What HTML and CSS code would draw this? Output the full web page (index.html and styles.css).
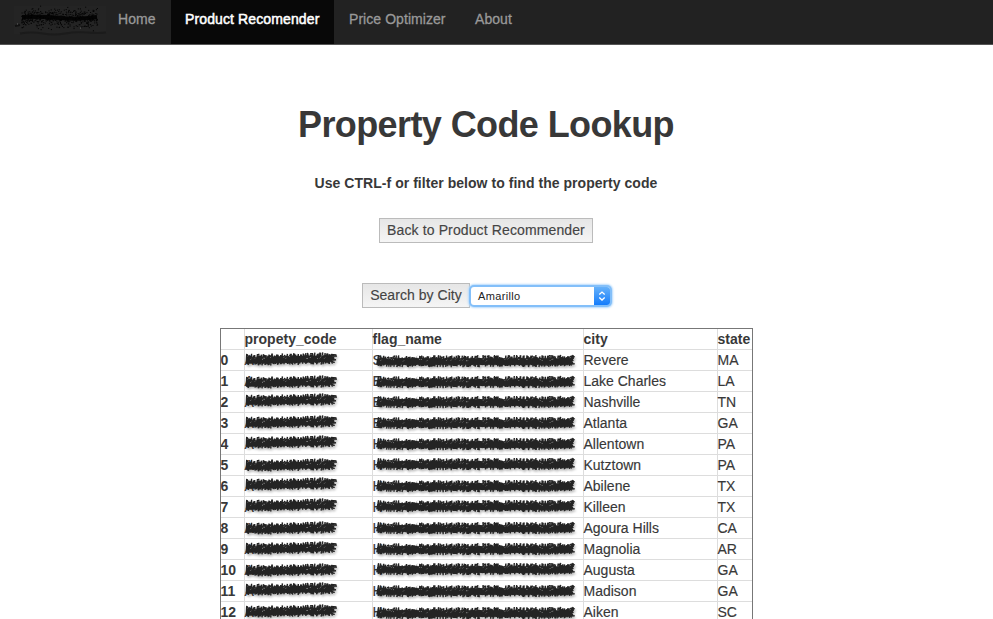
FILE: index.html
```html
<!DOCTYPE html>
<html lang="en">
<head>
<meta charset="utf-8">
<title>Property Code Lookup</title>
<link rel="stylesheet" href="styles.css">
</head>
<body>
<nav class="navbar">
  <span class="brand"><svg class="brand-mark" width="108" height="40" aria-hidden="true"></svg></span>
  <a class="nav-home">Home</a>
  <a class="active">Product Recomender</a>
  <a class="nav-price">Price Optimizer</a>
  <a class="nav-about">About</a>
</nav>
<main>
  <h1>Property Code Lookup</h1>
  <p class="hint">Use CTRL-f or filter below to find the property code</p>
  <button class="btn back">Back to Product Recommender</button>
  <div class="search">
    <button class="btn find">Search by City</button>
    <div class="select"><span>Amarillo</span>
      <i><svg width="16" height="18" viewBox="0 0 16 18"><path d="M5.3 7.6 8 5.1l2.7 2.5M5.3 10.6 8 13.1l2.7-2.5" fill="none" stroke="#fff" stroke-width="1.3"/></svg></i>
    </div>
  </div>
  <table>
    <colgroup><col class="c0"><col class="c1"><col class="c2"><col class="c3"><col class="c4"></colgroup>
    <thead><tr><th></th><th>propety_code</th><th>flag_name</th><th>city</th><th>state</th></tr></thead>
    <tbody></tbody>
  </table>
</main>
<script src="app.js"></script>
</body>
</html>
```
FILE: styles.css
```css
* { box-sizing: border-box; }
body {
  margin: 0;
  height: 619px;
  overflow: hidden;
  background: #fff;
  color: #383838;
  font: 14px/20px "Liberation Sans", Arial, sans-serif;
}
.navbar {
  display: flex;
  height: 45px;
  background: #222;
  border-bottom: 1px solid #555;
  color: #999;
}
.navbar a { padding: 9px 0 0 15px; letter-spacing: .06px; -webkit-text-stroke: .3px; white-space: nowrap; }
.brand { width: 103px; }
.brand-mark { display: block; }
.nav-home { width: 68px; }
.navbar .active { width: 163px; background: #080808; color: #fff; padding-left: 14px; letter-spacing: .12px; -webkit-text-stroke: .5px; }
.nav-price { width: 126px; }
main { display: flex; flex-direction: column; align-items: center; width: 972px; }
h1 { margin: 60px 0 0; font-size: 36px; line-height: 40px; font-weight: 700; letter-spacing: -.6px; white-space: nowrap; }
.hint { margin: 28px 0 0; font-weight: 700; letter-spacing: .04px; white-space: nowrap; }
.btn {
  height: 25px;
  padding: 0 0 2px;
  border: 1px solid #bbb;
  background: linear-gradient(#e6e6e6, #f5f5f5);
  color: #444;
  font: 14px/20px "Liberation Sans", Arial, sans-serif;
  -webkit-text-stroke: .15px;
  white-space: nowrap;
}
.back { width: 214px; margin-top: 25px; letter-spacing: .12px; }
.search { display: flex; align-items: center; margin: 40px 0 0 4px; width: 252px; height: 25px; }
.find { width: 108px; letter-spacing: .05px; }
.select {
  display: flex;
  justify-content: space-between;
  width: 139px;
  height: 18px;
  margin-left: 1px;
  border-radius: 3px;
  background: #fff;
  box-shadow: 0 0 0 2px #83bff9, 0 0 2px 3px #b5dafc;
  font-size: 11px;
  line-height: 19px;
  color: #222;
}
.select span { padding-left: 7px; letter-spacing: .35px; }
.select i { width: 16px; height: 18px; border-radius: 0 3px 3px 0; background: linear-gradient(#65b1fa, #147cfb); }
.select svg { display: block; }
table {
  width: 532px;
  margin-top: 20px;
  table-layout: fixed;
  border-collapse: collapse;
  border: 1px solid #777;
  outline: 1px solid #777;
  outline-offset: -1px;
}
.c0 { width: 24px; }
.c1 { width: 128px; }
.c2 { width: 211px; }
.c3 { width: 134px; }
.c4 { width: 35px; }
tr { height: 21px; }
th, td { height: 21px; padding: 0; border: 1px solid #ddd; text-align: left; line-height: 20px; white-space: nowrap; }
th { letter-spacing: .02px; }
td { -webkit-text-stroke: .15px; }
.covered { position: relative; }
.covered svg { position: absolute; left: 0; top: 0; overflow: visible; filter: drop-shadow(1px 2px 1px #0004); }
```
FILE: app.js
```js
const rows = [
  ["Revere", "MA", "A", "S"], ["Lake Charles", "LA", "A", "E"], ["Nashville", "TN", "A", "E"],
  ["Atlanta", "GA", "A", "E"], ["Allentown", "PA", "A", "H"], ["Kutztown", "PA", "A", "H"],
  ["Abilene", "TX", "A", "H"], ["Killeen", "TX", "A", "H"], ["Agoura Hills", "CA", "A", "H"],
  ["Magnolia", "AR", "A", "H"], ["Augusta", "GA", "A", "H"], ["Madison", "GA", "A", "H"], ["Aiken", "SC", "A", "H"]
];
const codeShift = [0, 2, -1, 0, -1, 1, -1, -1, 1, 0, 1, -1, 0];
const flagShift = [1, 1, 0, 0, 0, -1, 0, -1, 0, 0, -1, 0, 1];

function random(seed) {
  return () => (seed = (seed * 16807) % 2147483647) / 2147483647;
}

// Rough marker stroke: a solid core, frayed edges and a few light flecks.
function marker(width, seed, tilt) {
  const r = random(seed);
  let ink = "", flecks = "";
  for (let x = 1; x < width - 3; x += 0.9) {
    const slope = tilt * (1 - 2 * x / width);
    const top = 3 + slope + r() * 3.6;
    const bottom = 11.8 + slope + r() * 3.4;
    ink += `M${(x + r() * 2).toFixed(1)} ${top.toFixed(1)}L${(x - r() + .6).toFixed(1)} ${bottom.toFixed(1)}`;
    if (r() < .22) flecks += `M${x.toFixed(1)} ${(4.5 + slope + r() * 5).toFixed(1)}l.8 -.8`;
  }
  for (let i = 0; i < 5; i++) ink += `M${width - 5} ${4.5 + i * 1.9}l${(3 + r() * 3).toFixed(1)} ${(r() - .5).toFixed(1)}`;
  const core = `M2 ${9.5 + tilt}L${width - 4} ${9.5 - tilt}`;
  return `<path d="${core}" stroke="#242424" stroke-width="6.5"/><path d="${ink}" stroke="#242424" stroke-width="1.4" fill="none"/><path d="${flecks}" stroke="#999" stroke-width=".8" fill="none"/>`;
}

const codeInk = marker(91, 731, 0.9);
const flagInk = marker(199, 1879, 0.1);
document.querySelector("tbody").innerHTML = rows.map(([city, state, a, b], i) => `<tr><th>${i}</th>
  <td><div class="covered">${a}<svg width="92" height="20"><g transform="translate(0 ${codeShift[i]})">${codeInk}</g></svg></div></td>
  <td><div class="covered">${b}<svg width="205" height="20"><g transform="translate(3 ${flagShift[i] + 1})">${flagInk}</g></svg></div></td>
  <td>${city}</td><td>${state}</td></tr>`).join("");

// Dark spray over the brand name.
const r = random(417);
let spray = "";
for (let i = 0; i < 520; i++) {
  const spread = (r() + r() + r() - 1.5) * 9;
  spray += `M${(21 + r() * 76).toFixed(1)} ${(18 + spread).toFixed(1)}h1.1`;
}
document.querySelector(".brand-mark").innerHTML =
  `<rect x="14" y="6" width="92" height="28" fill="#242424"/><path d="M20 33.5q12-2 23 0t22 0 22-1 19 0" stroke="#1b1b1b" stroke-width="2" fill="none"/>
  <path d="M22 17q20-1 38 1t37-1" stroke="#050505" stroke-width="4" fill="none"/><path d="${spray}" stroke="#050505"/>
  <path d="M15 26l5-1" stroke="#111" stroke-width="2"/><path d="M17 24h1M80 28h1" stroke="#666"/>`;
```
